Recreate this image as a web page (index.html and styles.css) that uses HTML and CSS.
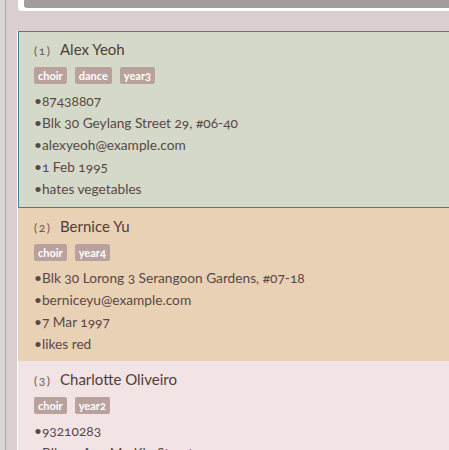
FILE: index.html
```html
<!DOCTYPE html>
<html>
<head>
<meta charset="utf-8">
<link rel="stylesheet" href="styles.css">
</head>
<body>
<div class="app">
  <div class="edge"></div>
  <div class="rule"></div>
  <div class="main">
    <div class="toppanel"><div class="topinner"></div></div>
    <div class="list">
      <div class="card card-green selected">
        <div class="head"><span class="idx">(1)</span><span class="name">Alex Yeoh</span></div>
        <div class="tags"><span class="tag">choir</span><span class="tag">dance</span><span class="tag">year3</span></div>
        <div class="line">•87438807</div>
        <div class="line">•Blk 30 Geylang Street 29, #06-40</div>
        <div class="line">•alexyeoh@example.com</div>
        <div class="line">•1 Feb 1995</div>
        <div class="line">•hates vegetables</div>
      </div>
      <div class="card card-tan">
        <div class="head"><span class="idx">(2)</span><span class="name">Bernice Yu</span></div>
        <div class="tags"><span class="tag">choir</span><span class="tag">year4</span></div>
        <div class="line">•Blk 30 Lorong 3 Serangoon Gardens, #07-18</div>
        <div class="line">•berniceyu@example.com</div>
        <div class="line">•7 Mar 1997</div>
        <div class="line">•likes red</div>
      </div>
      <div class="card card-pink">
        <div class="head"><span class="idx">(3)</span><span class="name">Charlotte Oliveiro</span></div>
        <div class="tags"><span class="tag">choir</span><span class="tag">year2</span></div>
        <div class="line">•93210283</div>
        <div class="line">•Blk 11 Ang Mo Kio Street 74, #11-04</div>
      </div>
    </div>
  </div>
</div>
</body>
</html>
```
FILE: styles.css
```css
html, body {
  margin: 0;
  padding: 0;
  height: 100%;
  overflow: hidden;
}
body {
  background: #dacfcf;
  font-family: Lato, "Open Sans", sans-serif;
  font-variant-numeric: oldstyle-nums;
  color: #5a4845;
}
.app {
  display: flex;
  height: 450px;
  overflow: hidden;
}
.edge {
  width: 5px;
  background: #ddd4d4;
  flex: none;
}
.rule {
  width: 1px;
  background: #a7a4e4;
  flex: none;
}
.main {
  flex: 1;
  display: flex;
  flex-direction: column;
  padding-left: 11px;
  min-width: 0;
  overflow: hidden;
}
.toppanel {
  height: 11px;
  background: #ffffff;
  border-bottom-left-radius: 4px;
  margin-left: 1px;
  padding-left: 6px;
  flex: none;
}
.topinner {
  height: 8px;
  background: #a29c9c;
  border-bottom-left-radius: 3px;
}
.list {
  margin-top: 20px;
  border-left: 1px solid #ffffff;
  display: flex;
  flex-direction: column;
}
.card {
  padding: 9px 0 6px 16px;
}
.card-green { background: #d4d9c9; }
.card-tan { background: #e9d1b6; }
.card-pink { background: #f2e3e5; }
.selected {
  border: 1px solid #4b7f8c;
  border-right: none;
  padding: 8px 0 7px 15px;
}
.head {
  display: flex;
  align-items: baseline;
  height: 20px;
}
.idx {
  font-size: 12px;
  letter-spacing: 1.5px;
  width: 26px;
  color: #6a5855;
}
.name {
  font-size: 15px;
  color: #4e3d3a;
}
.tags {
  display: flex;
  gap: 8px;
  margin-top: 7px;
  margin-bottom: 6px;
}
.tag {
  background: #b9a29e;
  color: #ffffff;
  font-size: 11px;
  font-weight: bold;
  padding: 1px 4px;
  border-radius: 2px;
  line-height: 15px;
}
.line {
  font-size: 13.7px;
  line-height: 22px;
}
```
